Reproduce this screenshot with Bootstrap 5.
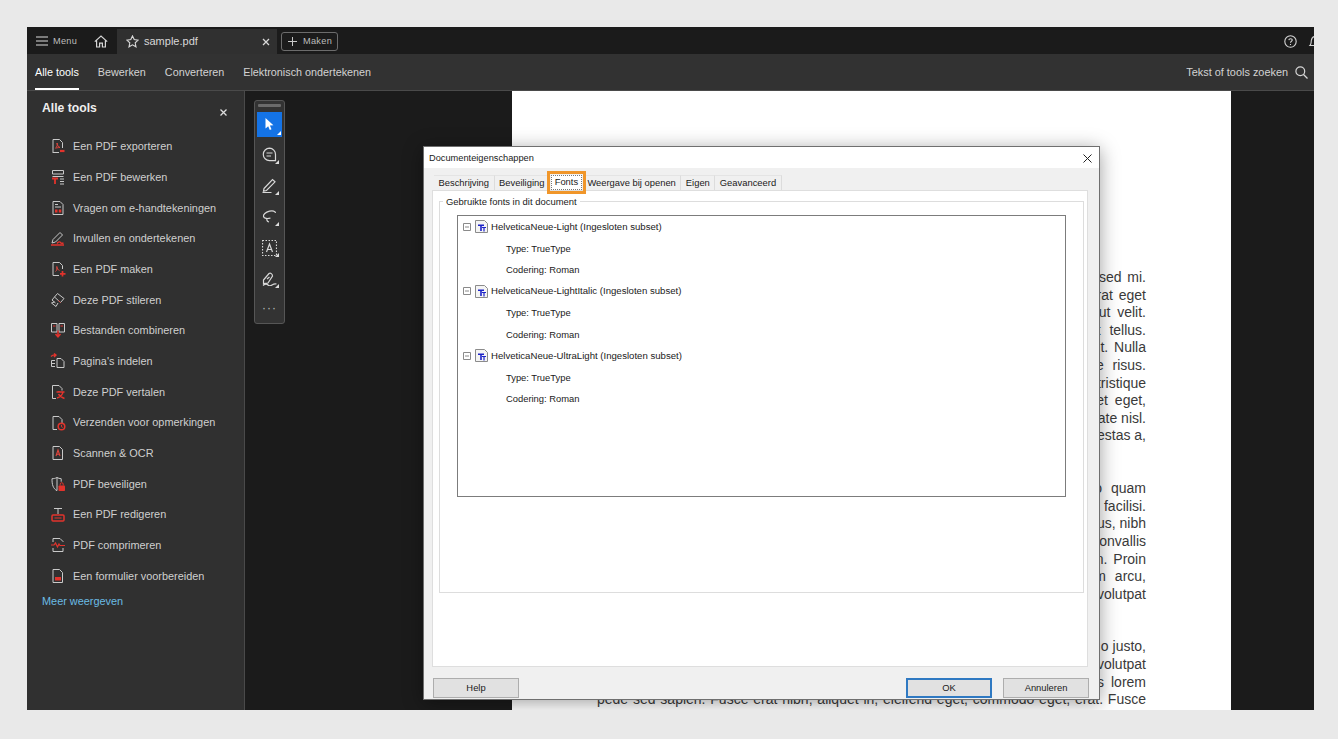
<!DOCTYPE html>
<html lang="nl">
<head>
<meta charset="utf-8">
<title>sample.pdf</title>
<link href="https://cdn.jsdelivr.net/npm/bootstrap@5.3.0/dist/css/bootstrap.min.css" rel="stylesheet">
<style>
html,body{height:739px;overflow:hidden;}
body{background:#e9e9e9;font-family:"Liberation Sans",Arial,sans-serif;padding:27px 24px 29px 27px;}
.shell{position:relative;height:683px;overflow:hidden;background:#1b1b1b;color:#d2d2d2;display:flex;flex-direction:column;}
svg{display:block;flex:none;}
.topbar{height:27px;padding-top:2px;background:#1b1b1b;flex:none;}
.menu-btn{width:63px;padding-left:9px;gap:5px;font-size:9.2px;letter-spacing:.3px;color:#bdbdbd;}
.home-btn{width:22px;justify-content:center;}
.file-tab{width:160px;height:25px;background:#303030;padding:0 7px 0 9px;margin-left:5px;font-size:11px;color:#d8d8d8;}
.file-name{margin-left:5px;flex:1;}
.make-btn{margin-left:4px;width:57px;height:19px;border:1px solid #6c6c6c;border-radius:3px;font-size:9.2px;letter-spacing:.3px;color:#bdbdbd;gap:6px;padding-left:6px;}
.help-wrap{margin-left:auto;gap:11px;margin-right:-8px;}
.toolnav{height:37px;background:#323232;border-bottom:1px solid #4a4a4a;padding:0 6px 0 8px;font-size:10.8px;flex:none;}
.toolnav-link{display:block;height:36px;line-height:36px;margin-right:19px;color:#d2d2d2;}
.toolnav-link.is-on{color:#fff;border-bottom:2px solid #fff;}
.search-box{margin-left:auto;gap:7px;font-size:10.9px;}
.workspace{flex:1;min-height:0;}
.side{width:218px;background:#303030;border-right:1px solid #4a4a4a;flex:none;}
.side-head{height:40px;padding:10px 17px 0 15px;}
.side-title{font-size:12.2px;font-weight:700;color:#eee;margin:0;line-height:15px;}
.side-list{--bs-list-group-bg:transparent;--bs-list-group-border-width:0;--bs-list-group-color:#cfcfcf;}
.side-row{height:30.7px;padding:0 0 0 23px;gap:7px;font-size:10.9px;display:flex;align-items:center;}
.side-more{font-size:10.9px;color:#6bbbe4;padding:3px 0 0 15px;line-height:14px;}
.canvas{flex:1;min-width:0;padding:0 83px 0 9px;}
.tools-col{width:31px;height:224px;margin-top:9px;background:#333;border:1px solid #565656;border-radius:3px;padding:3px 2px 0;flex:none;}
.grip{height:3px;background:#6b6b6b;border-radius:1px;margin:0 1px 5px;}
.tool-cell{height:31px;position:relative;display:flex;align-items:center;justify-content:center;}
.tool-cell.is-sel{height:25px;background:#1473e6;margin-bottom:2px;}
.tool-cell::after{content:"";position:absolute;right:3px;bottom:6px;border-style:solid;border-width:0 0 4px 4px;border-color:transparent transparent #ddd transparent;}
.tool-cell.is-sel::after{right:1px;bottom:2px;border-color:transparent transparent #fff transparent;}
.tool-dots{font-size:12px;letter-spacing:1px;color:#bbb;height:27px;line-height:28px;text-align:center;}
.sheet{width:719px;margin-left:227px;background:#fff;padding:178px 85px 0 85px;color:#3a3a3a;font-size:14px;line-height:17.6px;flex:none;overflow:hidden;}
.pline{display:block;text-align:right;white-space:nowrap;height:17.6px;}
.pline-full{text-align:justify;text-align-last:justify;white-space:normal;overflow:hidden;}
.ws2{word-spacing:2px;}
.ws3{word-spacing:3px;}
.ws5{word-spacing:5px;}
.pgap{height:35.2px;}
.dlg{position:absolute;left:396px;top:119px;width:677px;height:554px;background:#f0f0f0;border:1px solid #6f6f6f;box-shadow:0 3px 18px rgba(0,0,0,.38);color:#1a1a1a;font-size:9.6px;display:flex;flex-direction:column;}
.dlg-title{height:21px;background:#fff;padding:2px 7px 0 5px;flex:none;font-size:9.25px;}
.dlg-body{flex:1;padding:7px 11px 0 8px;min-height:0;display:flex;flex-direction:column;}
.dlg-tabs{--bs-nav-tabs-border-width:0;height:15px;padding-left:2px;flex-wrap:nowrap;flex:none;position:relative;z-index:1;font-size:9.4px;}
.dtab{height:15px;padding:0 4.5px;border:0;border-right:1px solid #dcdcdc;border-top:1px solid #e4e4e4;line-height:13px;background:#f0f0f0;color:#1a1a1a;white-space:nowrap;}
.dtab.is-active{background:#fff;width:31px;height:15px;margin:0 1px 0 1px;padding:0;text-align:center;line-height:12px;border:1px dotted #777;outline:3px solid #f0962a;outline-offset:1px;position:relative;z-index:2;}
.dlg-panel{flex:none;height:477px;background:#fff;border:1px solid #dedede;padding:10px 3px 0 6px;}
.grp{position:relative;height:392px;border:1px solid #ddd;padding:13px 17px 0 17px;}
.grp-label{position:absolute;left:3px;top:-6px;background:#fff;padding:0 3px;line-height:12px;font-size:9.45px;}
.font-list{height:282px;border:1px solid #7c7c7c;padding:0 5px;background:#fff;}
.fnode{height:21.5px;gap:4px;}
.fnode span{margin-left:-1px;}
.fchild{height:21.5px;line-height:21.5px;padding-left:43px;font-size:9.4px;}
.dlg-foot{flex:1;padding:11px 0 0 1px;margin-right:-1px;}
.dbtn{width:86px;height:20px;padding:0;background:#e1e1e1;border:1px solid #adadad;border-radius:0;font-size:9.4px;line-height:18px;color:#1a1a1a;}
.dbtn.is-default{border:2px solid #2f79c2;line-height:16px;margin-right:11px;}
</style>
</head>
<body>
<div class="shell">
  <div class="topbar d-flex align-items-center">
    <div class="menu-btn d-flex align-items-center">
      <svg width="12" height="10" viewBox="0 0 12 10"><path d="M0 1h12M0 5h12M0 9h12" stroke="#dcdcdc" stroke-width="1.1"/></svg>
      <span>Menu</span>
    </div>
    <div class="home-btn d-flex align-items-center">
      <svg width="14" height="13" viewBox="0 0 14 13" fill="none" stroke="#d6d6d6" stroke-width="1.2"><path d="M.8 6.6 7 1l6.2 5.6M2.600 5.400V12H5.600V8.200h2.800V12h3V5.400"/></svg>
    </div>
    <div class="file-tab d-flex align-items-center">
      <svg width="13" height="13" viewBox="0 0 13 13" fill="none" stroke="#d8d8d8" stroke-width="1.1"><path d="M6.500.9 8.200 4.600l4 .5-3 2.700.8 4-3.500-2-3.500 2 .8-4-3-2.700 4-.5z"/></svg>
      <span class="file-name">sample.pdf</span>
      <svg width="8" height="8" viewBox="0 0 8 8"><path d="M1 1l6 6M7 1 1 7" stroke="#d8d8d8" stroke-width="1.3"/></svg>
    </div>
    <div class="make-btn d-flex align-items-center">
      <svg width="9" height="9" viewBox="0 0 9 9"><path d="M4.500 0v9M0 4.500h9" stroke="#c8c8c8" stroke-width="1"/></svg>
      <span>Maken</span>
    </div>
    <div class="help-wrap d-flex align-items-center">
      <svg width="13" height="13" viewBox="0 0 13 13" fill="none" stroke="#d6d6d6" stroke-width="1.1"><circle cx="6.500" cy="6.500" r="5.700"/><path d="M4.800 5.100c.2-1.900 3.500-1.900 3.500 0 0 1.200-1.800 1.200-1.800 2.600"/><path d="M6.500 9v1"/></svg>
      <svg width="14" height="14" viewBox="0 0 14 14" fill="none" stroke="#d6d6d6" stroke-width="1.1"><path d="M2 10.500c1.500-1.500 1-3 1.300-5C3.700 3 5.200 1.500 7 1.500s3.300 1.500 3.700 4c.3 2-.2 3.500 1.300 5z"/></svg>
    </div>
  </div>

  <div class="toolnav d-flex align-items-start">
    <span class="toolnav-link is-on">Alle tools</span>
    <span class="toolnav-link">Bewerken</span>
    <span class="toolnav-link">Converteren</span>
    <span class="toolnav-link">Elektronisch ondertekenen</span>
    <div class="search-box d-flex align-items-center h-100">
      <span>Tekst of tools zoeken</span>
      <svg width="13" height="13" viewBox="0 0 13 13" fill="none" stroke="#d6d6d6" stroke-width="1.2"><circle cx="5.300" cy="5.300" r="4.400"/><path d="m8.500 8.500 4 4"/></svg>
    </div>
  </div>

  <div class="workspace d-flex">
    <aside class="side">
      <div class="side-head d-flex justify-content-between align-items-start">
        <h2 class="side-title">Alle tools</h2>
        <svg class="mt-2" width="7" height="7" viewBox="0 0 7 7"><path d="m.5.500 6 6m0-6-6 6" stroke="#ddd" stroke-width="1.3"/></svg>
      </div>
      <div class="list-group side-list">
        <div class="list-group-item side-row"><svg width="16" height="16" viewBox="0 0 16 16" fill="none" stroke="#c9c9c9"><path d="M3 15V1.500h6.500l3 3V10M3 14.500h6"/><path d="M5.500 10c2-1 2-4 1.500-5 0 2 1.500 4 3 4.500-2 0-3 .5-4.500.5z" stroke="#e2453c"/><path d="M10 13h4.500" stroke="#e2332c" stroke-width="2.2"/></svg><span>Een PDF exporteren</span></div>
        <div class="list-group-item side-row"><svg width="16" height="16" viewBox="0 0 16 16" fill="none" stroke="#c9c9c9"><path d="M2.500 1.500h11V5h-11zM2.500 7.500h11"/><path d="M2 9.500h6M5 9.500V15" stroke="#e2332c" stroke-width="1.8"/><path d="M10 10h4M10 12.500h4M10 15h4"/></svg><span>Een PDF bewerken</span></div>
        <div class="list-group-item side-row"><svg width="16" height="16" viewBox="0 0 16 16" fill="none" stroke="#c9c9c9"><path d="M3 1.500h7l3 3v10H3zM5 4.500h3M5 7h6"/><path d="M5 9.500h2.500v3H5zM8.800 9.500h2.500v3H8.800z" fill="#e2332c" stroke="none"/></svg><span>Vragen om e-handtekeningen</span></div>
        <div class="list-group-item side-row"><svg width="16" height="16" viewBox="0 0 16 16" fill="none" stroke="#c9c9c9"><path d="M2 13 3 9.500 10 2.500l2.500 2.500L5.500 12z"/><path d="M1 15h13M7 13.500c1.500-2 3-2 3.500-1 .5 1 1.500 1 3 .5" stroke="#e2332c" stroke-width="1.4"/></svg><span>Invullen en ondertekenen</span></div>
        <div class="list-group-item side-row"><svg width="16" height="16" viewBox="0 0 16 16" fill="none" stroke="#c9c9c9"><path d="M9 14.500H3V1.500h6.500l3 3V8"/><path d="M5.500 10.500c1.500-1 1.800-3.500 1.300-5 0 2 1.200 3.500 2.700 4" stroke="#e2453c"/><path d="M12.500 10v5.500M10 12.800h5.500" stroke="#e2332c" stroke-width="1.7"/></svg><span>Een PDF maken</span></div>
        <div class="list-group-item side-row"><svg width="16" height="16" viewBox="0 0 16 16" fill="none" stroke="#c9c9c9"><path d="m7.500 1.500 6.500 5-3.500 4-6-5.500zM4.500 5 2 8l3.500 3M8 11l-2 3.500L1.500 11l3-1"/><path d="m8.500 8.500 2 2" stroke="#e2453c"/></svg><span>Deze PDF stileren</span></div>
        <div class="list-group-item side-row"><svg width="16" height="16" viewBox="0 0 16 16" fill="none" stroke="#c9c9c9"><path d="M1.500 10V1.500H7V10zM9 10V1.500h5.500V10z"/><path d="M3 4h2.500M10.500 4H13" stroke="#e2332c"/><path d="M8 8.500v6M5.500 12 8 14.800 10.500 12" stroke="#e2332c" stroke-width="1.5"/></svg><span>Bestanden combineren</span></div>
        <div class="list-group-item side-row"><svg width="16" height="16" viewBox="0 0 16 16" fill="none" stroke="#c9c9c9"><path d="M7 5.500h4l3 3v6H7zM1.500 7.500H5M1.500 10.500H5M1.500 13.500H5M1.500 7.500v6"/><path d="M1 3.500c1-1 3-2 5-1.500M4 .5l2 1.500-2 2" stroke="#e2332c" stroke-width="1.4"/></svg><span>Pagina's indelen</span></div>
        <div class="list-group-item side-row"><svg width="16" height="16" viewBox="0 0 16 16" fill="none" stroke="#c9c9c9"><path d="M6 14.500H2.500V1.500H9l3 3v2"/><path d="M6.500 8h8M9 7v1.500M13 8c-.5 3-3 5-6 6M8.500 10c1 2 3 3.500 6 4.500" stroke="#e2332c" stroke-width="1.500"/></svg><span>Deze PDF vertalen</span></div>
        <div class="list-group-item side-row"><svg width="16" height="16" viewBox="0 0 16 16" fill="none" stroke="#c9c9c9"><path d="M7 14.500H3V1.500h6l3 3v4"/><circle cx="11.500" cy="11.500" r="3.300" stroke="#e2332c" stroke-width="1.500"/><path d="M11.500 9.800v2l1.200.6" stroke="#e2332c"/></svg><span>Verzenden voor opmerkingen</span></div>
        <div class="list-group-item side-row"><svg width="16" height="16" viewBox="0 0 16 16" fill="none" stroke="#c9c9c9"><path d="M3 1.500h6.500l3 3v10H3z"/><path d="M6 11l2-6 2 6M6.700 9.300h2.600" stroke="#e2453c" stroke-width="1.100"/></svg><span>Scannen &amp; OCR</span></div>
        <div class="list-group-item side-row"><svg width="16" height="16" viewBox="0 0 16 16" fill="none" stroke="#c9c9c9"><path d="M7 1.500c-1.800 1-3.500 1.200-5 1.200 0 6 1 9.800 5 12M7 1.500c1.300.8 2.700 1.100 4.200 1.200v3M7 1.500v13"/><rect x="8.500" y="9.500" width="6.500" height="5.500" rx=".8" fill="#e2332c" stroke="none"/><path d="M10.200 9.500V8.200a1.500 1.500 0 0 1 3 0v1.300" stroke="#e2332c"/></svg><span>PDF beveiligen</span></div>
        <div class="list-group-item side-row"><svg width="16" height="16" viewBox="0 0 16 16" fill="none" stroke="#c9c9c9"><path d="M4 1.500h8M8 1.500V7"/><rect x="2" y="8" width="12" height="6" rx="1" stroke="#e2332c" stroke-width="1.500"/><path d="M4.500 11h7" stroke="#e2332c"/></svg><span>Een PDF redigeren</span></div>
        <div class="list-group-item side-row"><svg width="16" height="16" viewBox="0 0 16 16" fill="none" stroke="#c9c9c9"><path d="M3 5V1.500h7l3 3V5M3 11v3.500h10V11"/><path d="M1 8h3l1.500-2 2 4L9 7l1 1.500h5" stroke="#e2332c" stroke-width="1.200"/></svg><span>PDF comprimeren</span></div>
        <div class="list-group-item side-row"><svg width="16" height="16" viewBox="0 0 16 16" fill="none" stroke="#c9c9c9"><path d="M3 1.500h6.500l3 3v10H3z"/><rect x="5" y="9" width="6" height="3.500" fill="#e2332c" stroke="none"/></svg><span>Een formulier voorbereiden</span></div>
      </div>
      <div class="side-more">Meer weergeven</div>
    </aside>

    <div class="canvas d-flex align-items-start">
      <div class="tools-col d-flex flex-column">
        <div class="grip"></div>
        <div class="tool-cell is-sel"><svg width="11" height="13" viewBox="0 0 11 13"><path d="M1.500 0v10.500l2.700-2.300 1.600 3.800 1.700-.7-1.600-3.700 3.500-.3z" fill="#fff"/></svg></div>
        <div class="tool-cell"><svg width="15" height="15" viewBox="0 0 15 15" fill="none" stroke="#d8d8d8" stroke-width="1.2"><path d="M7.500 1.200a6.200 6.200 0 1 0 0 12.400h6V7.500a6.200 6.200 0 0 0-6-6.300z"/><path d="M4.500 6h6M4.500 9h4.500"/></svg></div>
        <div class="tool-cell"><svg width="15" height="15" viewBox="0 0 15 15" fill="none" stroke="#d8d8d8" stroke-width="1.2"><path d="M2 10.500 10.500 1.500l2.500 2.300-8.500 8.700-3 .7zM.5 14.500h9"/></svg></div>
        <div class="tool-cell"><svg width="15" height="13" viewBox="0 0 15 13" fill="none" stroke="#d8d8d8" stroke-width="1.2"><path d="M13.500 3c0-2-3-2.500-6-1.800C3.500 2.200 1 4.500 1.500 6.500c.5 2 4 2.500 7 1.500M5 8.500c-.5 1.500 0 3 2 3.500"/></svg></div>
        <div class="tool-cell"><svg width="15" height="16" viewBox="0 0 15 16" fill="none" stroke="#d8d8d8"><path d="M.5.500h14v15H.5z" stroke-dasharray="1.500 1.500" stroke-width="1.200"/><path d="m4.500 12 3-8 3 8M5.500 9.500h4" stroke-width="1.200"/></svg></div>
        <div class="tool-cell"><svg width="16" height="15" viewBox="0 0 16 15" fill="none" stroke="#d8d8d8" stroke-width="1.2"><path d="M1.500 9 7 2.500c1.500-1 3.500.5 3.500 2.500L6 12l-4.500.5zM5 8l2.500-2M1 14.500c2-1.500 4-1.500 5-.5s2.500 1 4 0 3-1.500 4.500-1"/></svg></div>
        <div class="tool-dots">&middot;&middot;&middot;</div>
      </div>

      <div class="sheet h-100">
        <span class="pline ws2">sed mi.</span>
        <span class="pline ws2">rat eget</span>
        <span class="pline ws3">ut velit.</span>
        <span class="pline ws5">t tellus.</span>
        <span class="pline ws2">it. Nulla</span>
        <span class="pline ws5">e risus.</span>
        <span class="pline">tristique</span>
        <span class="pline ws3">et eget,</span>
        <span class="pline">ate nisl.</span>
        <span class="pline">estas a,</span>
        <div class="pgap"></div>
        <span class="pline ws5">o quam</span>
        <span class="pline">facilisi.</span>
        <span class="pline">us, nibh</span>
        <span class="pline">convallis</span>
        <span class="pline ws2">n. Proin</span>
        <span class="pline ws5">m arcu,</span>
        <span class="pline">volutpat</span>
        <div class="pgap"></div>
        <span class="pline">o justo,</span>
        <span class="pline">volutpat</span>
        <span class="pline ws3">s lorem</span>
        <span class="pline pline-full">pede sed sapien. Fusce erat nibh, aliquet in, eleifend eget, commodo eget, erat. Fusce</span>
      </div>
    </div>
  </div>

  <div class="dlg" role="dialog">
    <div class="dlg-title d-flex align-items-center justify-content-between">
      <span>Documenteigenschappen</span>
      <svg width="9" height="9" viewBox="0 0 9 9"><path d="m.5.500 8 8m0-8-8 8" stroke="#222" stroke-width="1"/></svg>
    </div>
    <div class="dlg-body">
      <div class="nav nav-tabs dlg-tabs">
        <span class="dtab">Beschrijving</span>
        <span class="dtab">Beveiliging</span>
        <span class="dtab is-active">Fonts</span>
        <span class="dtab">Weergave bij openen</span>
        <span class="dtab">Eigen</span>
        <span class="dtab">Geavanceerd</span>
      </div>
      <div class="dlg-panel">
        <div class="grp">
          <span class="grp-label">Gebruikte fonts in dit document</span>
          <div class="font-list">
            <div class="fnode d-flex align-items-center">
              <svg width="8" height="8" viewBox="0 0 8 8" fill="none" stroke="#8a8a8a"><path d="M.5.500h7v7h-7zM2 4h4"/></svg>
              <svg width="13" height="13" viewBox="0 0 13 13"><path d="M.5.500h9l3 3v9H.5z" fill="#f4f4f4" stroke="#8b8b8b"/><path d="M3 4.500h6V6H6.800v5H5.200V6H3z" fill="#1c22c8"/><path d="M7 7h4v1H9.600v3.500H8.400V8H7z" fill="#1c22c8"/></svg>
              <span>HelveticaNeue-Light (Ingesloten subset)</span>
            </div>
            <div class="fchild">Type: TrueType</div>
            <div class="fchild">Codering: Roman</div>
            <div class="fnode d-flex align-items-center">
              <svg width="8" height="8" viewBox="0 0 8 8" fill="none" stroke="#8a8a8a"><path d="M.5.500h7v7h-7zM2 4h4"/></svg>
              <svg width="13" height="13" viewBox="0 0 13 13"><path d="M.5.500h9l3 3v9H.5z" fill="#f4f4f4" stroke="#8b8b8b"/><path d="M3 4.500h6V6H6.800v5H5.200V6H3z" fill="#1c22c8"/><path d="M7 7h4v1H9.600v3.500H8.400V8H7z" fill="#1c22c8"/></svg>
              <span>HelveticaNeue-LightItalic (Ingesloten subset)</span>
            </div>
            <div class="fchild">Type: TrueType</div>
            <div class="fchild">Codering: Roman</div>
            <div class="fnode d-flex align-items-center">
              <svg width="8" height="8" viewBox="0 0 8 8" fill="none" stroke="#8a8a8a"><path d="M.5.500h7v7h-7zM2 4h4"/></svg>
              <svg width="13" height="13" viewBox="0 0 13 13"><path d="M.5.500h9l3 3v9H.5z" fill="#f4f4f4" stroke="#8b8b8b"/><path d="M3 4.500h6V6H6.800v5H5.200V6H3z" fill="#1c22c8"/><path d="M7 7h4v1H9.600v3.500H8.400V8H7z" fill="#1c22c8"/></svg>
              <span>HelveticaNeue-UltraLight (Ingesloten subset)</span>
            </div>
            <div class="fchild">Type: TrueType</div>
            <div class="fchild">Codering: Roman</div>
          </div>
        </div>
      </div>
      <div class="dlg-foot d-flex align-items-start">
        <button type="button" class="btn dbtn">Help</button>
        <button type="button" class="btn dbtn is-default ms-auto">OK</button>
        <button type="button" class="btn dbtn">Annuleren</button>
      </div>
    </div>
  </div>
</div>
<script src="https://cdn.jsdelivr.net/npm/bootstrap@5.3.0/dist/js/bootstrap.bundle.min.js"></script>
</body>
</html>
